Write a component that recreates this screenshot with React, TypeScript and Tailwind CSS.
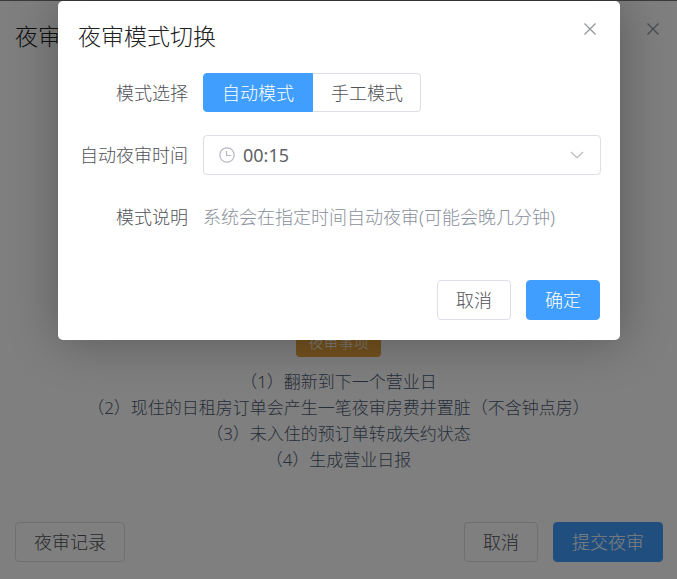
import clsx from "clsx";
import React, { useState } from "react";

const MODES = [
  { value: "auto", label: "自动模式" },
  { value: "manual", label: "手工模式" },
];

const AUDIT_ITEMS = [
  "（1）翻新到下一个营业日",
  "（2）现住的日租房订单会产生一笔夜审房费并置脏（不含钟点房）",
  "（3）未入住的预订单转成失约状态",
  "（4）生成营业日报",
];

interface ButtonProps {
  primary?: boolean;
  children: React.ReactNode;
}

function Button({ primary, children }: ButtonProps) {
  return (
    <button
      type="button"
      className={clsx(
        "h-10 rounded-[4px] border px-[18px] text-lg leading-none whitespace-nowrap",
        primary
          ? "border-[#409eff] bg-[#409eff] text-white"
          : "border-[#dcdfe6] bg-white text-[#505256]"
      )}
    >
      {children}
    </button>
  );
}

function CloseButton() {
  return (
    <button type="button" aria-label="关闭" className="p-1 text-[#909399]">
      <svg width="12" height="12" viewBox="0 0 12 12" fill="none" stroke="currentColor">
        <path d="M0.5 0.5L11.5 11.5M11.5 0.5L0.5 11.5" strokeWidth="1.2" />
      </svg>
    </button>
  );
}

function NightAuditDialog() {
  return (
    <section className="flex min-h-screen flex-col border-t border-[#777] bg-white pb-[17px]">
      <header className="flex items-start justify-between pt-[18px] pr-[14px] pl-[15px]">
        <h1 className="text-[23px] leading-[34px] text-[#202123]">夜审</h1>
        <CloseButton />
      </header>
      <div className="flex grow flex-col items-center px-4 pt-[274px] text-center">
        <span className="rounded-[4px] bg-[#e6a23c] px-3 py-1 text-[15px] leading-[22px] text-white">
          夜审事项
        </span>
        <ul className="pt-3 text-[17px] leading-[26px] text-[#4e5d72]">
          {AUDIT_ITEMS.map((item) => (
            <li key={item} className="whitespace-nowrap">
              {item}
            </li>
          ))}
        </ul>
      </div>
      <footer className="flex justify-between pr-[14px] pl-[15px]">
        <Button>夜审记录</Button>
        <div className="flex gap-[15px]">
          <Button>取消</Button>
          <Button primary>提交夜审</Button>
        </div>
      </footer>
    </section>
  );
}

function ModeSwitchDialog() {
  const [mode, setMode] = useState("auto");
  const [time, setTime] = useState("00:15");

  return (
    <section
      role="dialog"
      aria-labelledby="mode-dialog-title"
      className="rounded-[5px] bg-white pb-5 shadow-[1px_1px_50px_rgba(0,0,0,0.3)]"
    >
      <header className="flex items-start justify-between pt-[18px] pr-5 pl-5">
        <h2 id="mode-dialog-title" className="text-[23px] leading-[34px] text-[#202123]">
          夜审模式切换
        </h2>
        <CloseButton />
      </header>

      <form className="grid grid-cols-[130px_1fr] items-center gap-x-[15px] gap-y-[23px] pt-5 pr-[19px] text-lg text-[#505256]">
        <span id="mode-label" className="text-right">
          模式选择
        </span>
        <div role="radiogroup" aria-labelledby="mode-label" className="flex h-[39px]">
          {MODES.map((item) => (
            <label
              key={item.value}
              className={clsx(
                "relative flex cursor-pointer items-center border px-[18px] leading-none first:rounded-l-[4px] last:rounded-r-[4px] last:border-l-0 last:pr-[17px]",
                mode === item.value
                  ? "border-[#409eff] bg-[#409eff] text-white"
                  : "border-[#dcdfe6] bg-white"
              )}
            >
              <input
                type="radio"
                name="mode"
                value={item.value}
                checked={mode === item.value}
                onChange={() => setMode(item.value)}
                className="sr-only"
              />
              {item.label}
            </label>
          ))}
        </div>

        <label htmlFor="audit-time" className="text-right">
          自动夜审时间
        </label>
        <div className="flex h-10 items-center rounded-[4px] border border-[#dcdfe6] pr-4 pl-[15px] text-[#b4b7be]">
          <svg width="16" height="16" viewBox="0 0 16 16" fill="none" stroke="currentColor">
            <circle cx="8" cy="8" r="7.2" strokeWidth="1.2" />
            <path d="M7.5 4V8.5H12" strokeWidth="1.2" />
          </svg>
          <input
            id="audit-time"
            type="text"
            value={time}
            onChange={(e) => setTime(e.target.value)}
            className="min-w-0 grow pl-2 font-normal text-[#606266] outline-none"
          />
          <svg width="14" height="8" viewBox="0 0 14 8" fill="none" stroke="currentColor">
            <path d="M1 1L7 6.7L13 1" strokeWidth="1.1" />
          </svg>
        </div>

        <span className="text-right">模式说明</span>
        <p className="leading-[38px] whitespace-nowrap text-[#8a8f9c]">
          系统会在指定时间自动夜审(可能会晚几分钟)
        </p>
      </form>

      <footer className="flex justify-end gap-[15px] pt-11 pr-5">
        <Button>取消</Button>
        <Button primary>确定</Button>
      </footer>
    </section>
  );
}

export default function App() {
  return (
    <main className="relative min-h-screen font-['Noto_Sans','Noto_Sans_CJK_SC',sans-serif] font-light">
      <NightAuditDialog />
      <div className="absolute inset-0 overflow-hidden bg-black/50 pt-px pr-[57px] pl-[58px]">
        <ModeSwitchDialog />
      </div>
    </main>
  );
}
